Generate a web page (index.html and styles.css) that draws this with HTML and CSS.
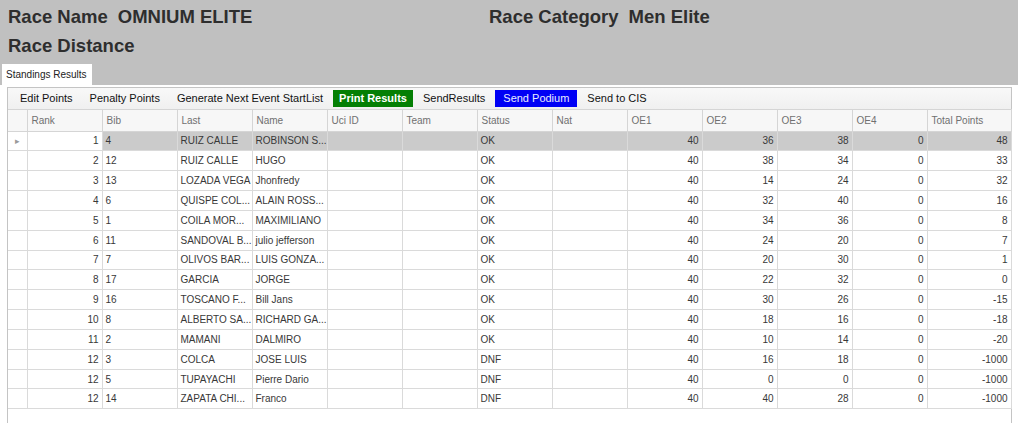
FILE: index.html
```html
<!DOCTYPE html>
<html lang="en">

<head>
    <meta charset="UTF-8">
    <title>Standings Results</title>
    <link rel="stylesheet" href="styles.css">
</head>

<body>
    <header class="race">
        <div class="info">
            <div class="field"><span>Race Name</span><span>OMNIUM ELITE</span></div>
            <div class="field"><span>Race Category</span><span>Men Elite</span></div>
            <div class="field"><span>Race Distance</span><span></span></div>
        </div>
        <div class="tabs">
            <div class="tab">Standings Results</div>
        </div>
    </header>

    <section class="page">
        <div class="panel">
            <div class="toolbar">
                <span class="tool">Edit Points</span>
                <span class="tool">Penalty Points</span>
                <span class="tool">Generate Next Event StartList</span>
                <span class="tool print">Print Results</span>
                <span class="tool">SendResults</span>
                <span class="tool podium">Send Podium</span>
                <span class="tool">Send to CIS</span>
            </div>

            <table class="grid">
                <colgroup>
                    <col class="c-head">
                    <col class="c-std"><col class="c-std"><col class="c-std"><col class="c-std">
                    <col class="c-std"><col class="c-std"><col class="c-std"><col class="c-std">
                    <col class="c-std"><col class="c-std"><col class="c-std"><col class="c-std">
                    <col class="c-total">
                </colgroup>
                <thead>
                    <tr>
                        <th></th>
                        <th>Rank</th>
                        <th>Bib</th>
                        <th>Last</th>
                        <th>Name</th>
                        <th>Uci ID</th>
                        <th>Team</th>
                        <th>Status</th>
                        <th>Nat</th>
                        <th>OE1</th>
                        <th>OE2</th>
                        <th>OE3</th>
                        <th>OE4</th>
                        <th>Total Points</th>
                    </tr>
                </thead>
                <tbody id="rows"></tbody>
            </table>
        </div>
    </section>

    <script type="text/javascript">
    var rows = [
        [1, '4', 'RUIZ CALLE', 'ROBINSON S...', 'OK', 40, 36, 38, 0, 48],
        [2, '12', 'RUIZ CALLE', 'HUGO', 'OK', 40, 38, 34, 0, 33],
        [3, '13', 'LOZADA VEGA', 'Jhonfredy', 'OK', 40, 14, 24, 0, 32],
        [4, '6', 'QUISPE COL...', 'ALAIN ROSS...', 'OK', 40, 32, 40, 0, 16],
        [5, '1', 'COILA MOR...', 'MAXIMILIANO', 'OK', 40, 34, 36, 0, 8],
        [6, '11', 'SANDOVAL B...', 'julio jefferson', 'OK', 40, 24, 20, 0, 7],
        [7, '7', 'OLIVOS BAR...', 'LUIS GONZA...', 'OK', 40, 20, 30, 0, 1],
        [8, '17', 'GARCIA', 'JORGE', 'OK', 40, 22, 32, 0, 0],
        [9, '16', 'TOSCANO F...', 'Bill Jans', 'OK', 40, 30, 26, 0, -15],
        [10, '8', 'ALBERTO SA...', 'RICHARD GA...', 'OK', 40, 18, 16, 0, -18],
        [11, '2', 'MAMANI', 'DALMIRO', 'OK', 40, 10, 14, 0, -20],
        [12, '3', 'COLCA', 'JOSE LUIS', 'DNF', 40, 16, 18, 0, -1000],
        [12, '5', 'TUPAYACHI', 'Pierre Dario', 'DNF', 40, 0, 0, 0, -1000],
        [12, '14', 'ZAPATA CHI...', 'Franco', 'DNF', 40, 40, 28, 0, -1000]
    ];

    var body = document.getElementById('rows');
    rows.forEach(function(r, i) {
        var tr = document.createElement('tr');
        if (i === 0) {
            tr.className = 'selected';
        }
        var cells = [
            ['head', i === 0 ? '\u25B8' : ''],
            ['num rank', r[0]],
            ['', r[1]],
            ['', r[2]],
            ['', r[3]],
            ['', ''],
            ['', ''],
            ['', r[4]],
            ['', ''],
            ['num', r[5]],
            ['num', r[6]],
            ['num', r[7]],
            ['num', r[8]],
            ['num', r[9]]
        ];
        cells.forEach(function(c) {
            var td = document.createElement('td');
            td.className = c[0];
            td.textContent = c[1];
            tr.appendChild(td);
        });
        body.appendChild(tr);
    });
    </script>
</body>

</html>
```

FILE: styles.css
```css
body {
    margin: 0;
    background: #fff;
    font-family: "Liberation Sans", Arial, sans-serif;
    color: #333;
}

.race {
    background: #c0c0c0;
}

.info {
    display: grid;
    grid-template-columns: 481px 1fr;
    padding: 2px 0 0 8px;
}

.field {
    display: flex;
    gap: 10px;
    height: 29px;
    line-height: 29px;
    font-size: 18.5px;
    font-weight: bold;
    color: #2e2e2e;
}

.tabs {
    display: flex;
    margin-top: 4px;
    padding-left: 2px;
}

.tab {
    background: #fff;
    height: 21px;
    line-height: 21px;
    padding: 0 5px 0 4px;
    font-size: 10px;
    color: #222;
}

.page {
    padding: 2px 6px 0 7px;
}

.panel {
    border: 1px solid #c4c4c4;
    border-bottom: none;
    height: 335px;
}

.toolbar {
    display: flex;
    align-items: center;
    gap: 3px;
    height: 21px;
    padding-left: 5px;
    background: linear-gradient(#f8f8f8, #f0f0f0);
    font-size: 11px;
    color: #111;
}

.tool {
    height: 17px;
    line-height: 17px;
    padding: 0 7px;
}

.tool.print {
    background: #047f04;
    color: #fff;
    font-weight: bold;
    padding: 0 6px;
}

.tool.podium {
    background: #0000f5;
    color: #e8ecff;
    padding: 0 8px;
}

.grid {
    border-collapse: collapse;
    table-layout: fixed;
    width: 1003px;
    font-size: 10px;
}

.c-head {
    width: 19px;
}

.c-std {
    width: 75px;
}

.c-total {
    width: 84px;
}

.grid th {
    height: 20.5px;
    padding: 0 4px;
    text-align: left;
    font-weight: normal;
    color: #707070;
    background: #f7f7f7;
    border: 1px solid #d5d5d5;
    white-space: nowrap;
}

.grid td {
    height: 18.85px;
    padding: 0 3px;
    border: 1px solid #dadada;
    white-space: nowrap;
    overflow: hidden;
    color: #383838;
}

.grid tr > :first-child {
    border-left: none;
}

.grid td.num {
    text-align: right;
}

.grid td.head {
    text-align: center;
    color: #9a9a9a;
    font-size: 9px;
    padding: 0;
}

.grid tr.selected td {
    background: #cbcbcb;
}

.grid tr.selected td.head,
.grid tr.selected td.rank {
    background: #fff;
}
```
